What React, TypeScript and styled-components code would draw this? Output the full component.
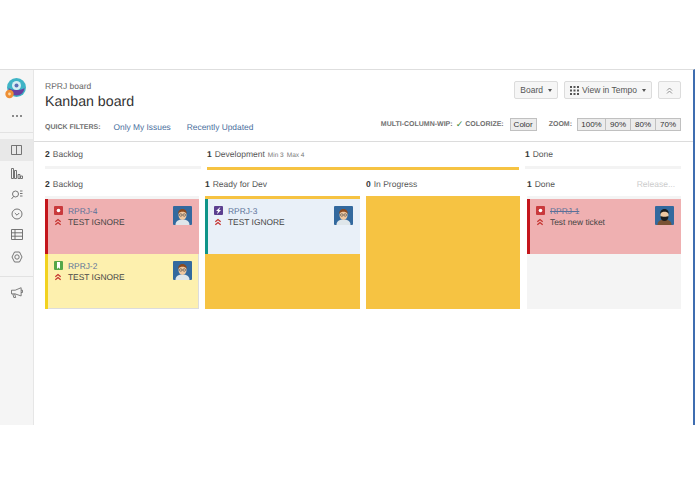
import { FC } from "react";
import styled, { createGlobalStyle } from "styled-components";

const GlobalStyle = createGlobalStyle`
  html, body {
    margin: 0;
    padding: 0;
    background: #fff;
    font-family: "Liberation Sans", Arial, sans-serif;
    color: #333;
    text-rendering: geometricPrecision;
  }
  * { box-sizing: border-box; }
`;

const Page = styled.div`
  width: 695px;
  height: 494px;
  padding-top: 69px;
  overflow: hidden;
`;

const Frame = styled.div`
  height: 356px;
  display: flex;
  border-top: 1px solid #dedede;
  border-right: 2px solid #3f6db0;
`;

const Sidebar = styled.nav`
  width: 34px;
  flex: none;
  background: #f5f5f5;
  border-right: 1px solid #e6e6e6;
  display: flex;
  flex-direction: column;
`;

const SideHead = styled.div`
  height: 63px;
  padding-top: 7px;
  display: flex;
  flex-direction: column;
  align-items: center;
  border-bottom: 1px solid #e2e2e2;
  margin-bottom: 6px;
`;

const Dots = styled.div`
  margin-top: 14px;
  display: flex;
  gap: 2px;
  i {
    width: 2px;
    height: 2px;
    background: #666;
    border-radius: 50%;
  }
`;

const SideItem = styled.div<{ $active?: boolean; $h: number }>`
  height: ${p => p.$h}px;
  display: flex;
  align-items: center;
  justify-content: center;
  background: ${p => (p.$active ? "#e8e8e8" : "transparent")};
  svg {
    fill: none;
    stroke: #666;
    stroke-width: 0.9;
  }
`;

const SideGroup = styled.div`
  border-bottom: 1px solid #e2e2e2;
  padding-bottom: 5px;
  margin-bottom: 5px;
`;

const Main = styled.main`
  flex: 1;
  min-width: 0;
  display: flex;
  flex-direction: column;
`;

const Header = styled.header`
  height: 72px;
  padding: 11px 12px 0 11px;
  border-bottom: 1px solid #dcdcdc;
`;

const TopRow = styled.div`
  display: flex;
  justify-content: space-between;
  align-items: flex-start;
  height: 37px;
`;

const Crumb = styled.div`
  font-size: 8.5px;
  line-height: 11px;
  color: #666;
`;

const Title = styled.h1`
  margin: 1px 0 0;
  font-size: 14.2px;
  line-height: 18px;
  font-weight: 400;
  color: #333;
`;

const Actions = styled.div`
  display: flex;
  gap: 6px;
`;

const Button = styled.button`
  height: 18px;
  padding: 0 5px;
  display: flex;
  align-items: center;
  gap: 3px;
  font: 8.5px "Liberation Sans", Arial, sans-serif;
  color: #555;
  background: #f6f6f6;
  border: 1px solid #dcdcdc;
  border-radius: 2px;
`;

const IconButton = styled(Button)`
  width: 23px;
  justify-content: center;
`;

const Caret = styled.span`
  width: 0;
  height: 0;
  margin-left: 2px;
  border-left: 2.5px solid transparent;
  border-right: 2.5px solid transparent;
  border-top: 3px solid #555;
`;

const FilterRow = styled.div`
  height: 16px;
  display: flex;
  justify-content: space-between;
`;

const Filters = styled.div`
  display: flex;
  align-items: flex-end;
`;

const SmallLabel = styled.span`
  font-size: 7px;
  line-height: 13px;
  font-weight: 700;
  color: #707070;
  white-space: nowrap;
`;

const FilterLink = styled.a`
  margin-left: 16px;
  font-size: 8.4px;
  line-height: 13px;
  color: #4a6f9e;
  ${SmallLabel} + & {
    margin-left: 13px;
  }
`;

const Tools = styled.div`
  display: flex;
  align-items: flex-start;
`;

const Check = styled.span`
  margin: 0 2px 0 3px;
  font-size: 9px;
  line-height: 13px;
  color: #3a8a3a;
`;

const ToolButton = styled.button`
  height: 13px;
  width: 27px;
  padding: 0;
  font: 8px "Liberation Sans", Arial, sans-serif;
  color: #333;
  background: #ececec;
  border: 1px solid #c0c0c0;
  margin-left: 6px;
  margin-right: 12px;
`;

const ZoomGroup = styled.div`
  margin-left: 5px;
  display: flex;
`;

const ZoomButton = styled.button<{ $wide: boolean }>`
  height: 13px;
  width: ${p => (p.$wide ? 29 : 25)}px;
  padding: 0;
  font: 8px "Liberation Sans", Arial, sans-serif;
  color: #333;
  background: #ececec;
  border: 1px solid #c0c0c0;
  & + & {
    border-left: none;
  }
`;

const Board = styled.section`
  padding: 0 12px 0 11px;
`;

const LaneRow = styled.div`
  display: grid;
  grid-template-columns: 156px 312px 156px;
  column-gap: 6px;
  height: 28px;
  padding-top: 7px;
`;

const Lane = styled.div`
  display: flex;
  flex-direction: column;
`;

const Label = styled.div`
  font-size: 8.5px;
  line-height: 11px;
  color: #555;
  white-space: nowrap;
  b {
    color: #333;
    margin-right: 3px;
  }
  small {
    margin-left: 3px;
    font-size: 6.5px;
    color: #777;
  }
`;

const LaneBar = styled.div<{ $color: string }>`
  height: 3px;
  margin-top: 6px;
  background: ${p => p.$color};
`;

const StatusRow = styled.div`
  display: grid;
  grid-template-columns: 154px 155px 154px 155px;
  column-gap: 6px;
  height: 26px;
  padding-top: 9px;
`;

const StatusLabel = styled(Label)`
  display: flex;
  justify-content: space-between;
  padding-right: 6px;
  margin-left: 1px;
  em {
    font-style: normal;
    color: #ccc;
  }
`;

const Columns = styled.div`
  display: grid;
  grid-template-columns: 154px 155px 154px 155px;
  column-gap: 6px;
`;

const Column = styled.div<{ $bg: string; $inset?: boolean }>`
  height: 113px;
  margin-left: ${p => (p.$inset ? 1 : 0)}px;
  background: ${p => p.$bg};
  padding-top: 3px;
`;

const Card = styled.article<{ $bg: string; $edge: string; $framed: boolean }>`
  height: 55px;
  padding: 6px 7px 0 6px;
  display: flex;
  align-items: flex-start;
  background: ${p => p.$bg};
  border-left: 3px solid ${p => p.$edge};
  box-shadow: ${p => (p.$framed ? "inset -1px -1px 0 #dcdcdc" : "none")};
  svg:last-child {
    margin-top: 1px;
  }
`;

const CardBody = styled.div`
  flex: 1;
  display: grid;
  grid-template-columns: 14px 1fr;
  grid-auto-rows: 11px;
  align-items: center;
`;

const IssueKey = styled.span<{ $done?: boolean }>`
  font-size: 8.4px;
  color: #5a7099;
  text-decoration: ${p => (p.$done ? "line-through" : "none")};
`;

const Summary = styled.span`
  font-size: 8.4px;
  color: #444;
`;

const TypeIcon: FC<{ kind: "bug" | "story" | "epic" }> = ({ kind }) => {
  const bg = kind === "bug" ? "#c9393c" : kind === "story" ? "#55a748" : "#5b3f8f";
  return (
    <svg width="9" height="9" viewBox="0 0 9 9">
      <rect width="9" height="9" rx="1" fill={bg} />
      {kind === "bug" && <circle cx="4.5" cy="4.5" r="1.8" fill="#fff" />}
      {kind === "story" && <path d="M3 1h3v7L4.500 6.600 3 8z" fill="#fff" />}
      {kind === "epic" && <path d="M6.500.8 2 5h2L3 8.200 7 4H5z" fill="#fff" />}
    </svg>
  );
};

const Priority = () => (
  <svg width="8" height="8" viewBox="0 0 9 9" fill="none" stroke="#c5322f" strokeWidth="1.4">
    <path d="M1.500 4.200 4.500 1.800l3 2.400" />
    <path d="M1.500 7.600l3-2.400 3 2.400" />
  </svg>
);

const Avatar: FC<{ beard?: boolean }> = ({ beard }) => (
  <svg width="19" height="19" viewBox="0 0 19 19">
    <rect width="19" height="19" rx="1" fill="#33699e" />
    <path d="M2.500 19c0-4 3-5.500 7-5.500s7 1.500 7 5.500z" fill={beard ? "#7a5233" : "#dfe6ea"} />
    <ellipse cx="9.500" cy="9" rx="4" ry="5" fill="#f0c8a0" />
    <path
      d="M5.300 8c-.4-3.500 2-5 4.200-5s4.600 1.500 4.200 5c-1-2-2.500-2.300-4.200-2.300S6.300 6 5.300 8z"
      fill={beard ? "#1c1c1c" : "#8c4a1e"}
    />
    {beard ? (
      <path d="M5.500 10c1 1 7 1 8 0 0 3-1.500 5-4 5s-4-2-4-5z" fill="#1c1c1c" />
    ) : (
      <g fill="none" stroke="#444" strokeWidth=".6">
        <circle cx="7.800" cy="9" r="1.300" />
        <circle cx="11.200" cy="9" r="1.300" />
      </g>
    )}
  </svg>
);

const Logo = () => (
  <svg width="23" height="24" viewBox="0 0 23 24">
    <circle cx="11.500" cy="10.500" r="9.500" fill="#3fb4c6" />
    <path d="M3.500 11c2 1.500 4.500 2 8 2s6-.5 8-2c-.5 4.500-3.500 7.500-8 7.500s-7.500-3-8-7.500z" fill="#6a3fa0" />
    <circle cx="11.500" cy="8.500" r="4.500" fill="#d6eef4" />
    <circle cx="11.500" cy="8.500" r="2" fill="#5a6fb5" />
    <circle cx="4.500" cy="17" r="4.200" fill="#ee8f35" />
    <circle cx="4.500" cy="17" r="1.400" fill="#f9d9a8" />
  </svg>
);

const issues = {
  four: { id: "RPRJ-4", text: "TEST IGNORE", kind: "bug", bg: "#efb0b1", edge: "#c4161c" },
  two: { id: "RPRJ-2", text: "TEST IGNORE", kind: "story", bg: "#fdf0ae", edge: "#f2d21f" },
  three: { id: "RPRJ-3", text: "TEST IGNORE", kind: "epic", bg: "#e9f0f8", edge: "#0f9488" },
  one: { id: "RPRJ-1", text: "Test new ticket", kind: "bug", bg: "#efb0b1", edge: "#c4161c", done: true },
} as const;

const IssueCard: FC<{ issue: (typeof issues)[keyof typeof issues] }> = ({ issue }) => {
  const done = "done" in issue;
  return (
    <Card $bg={issue.bg} $edge={issue.edge} $framed={issue.kind === "story"}>
      <CardBody>
        <TypeIcon kind={issue.kind} />
        <IssueKey $done={done}>{issue.id}</IssueKey>
        <Priority />
        <Summary>{issue.text}</Summary>
      </CardBody>
      <Avatar beard={done} />
    </Card>
  );
};

export default function App() {
  return (
    <Page>
      <GlobalStyle />
      <Frame>
        <Sidebar>
          <SideHead>
            <Logo />
            <Dots>
              <i />
              <i />
              <i />
            </Dots>
          </SideHead>
          <SideGroup>
            <SideItem $active $h={22}>
              <svg width="11" height="10" viewBox="0 0 11 10">
                <path d="M.5.5h10v9H.5zM5.500.5v9" />
              </svg>
            </SideItem>
            <SideItem $h={24}>
              <svg width="12" height="11" viewBox="0 0 12 11">
                <path d="M.5 10.500V.5h2v10zM3.500 10.500V2.500h2v8zM7 10.500V6.500h2v4zM9.500 10.500V8h2v2.500z" />
              </svg>
            </SideItem>
            <SideItem $h={18}>
              <svg width="12" height="11" viewBox="0 0 12 11">
                <circle cx="4.500" cy="5" r="3" />
                <path d="M2.500 7.500.5 10M9 2h2.500M9 4.500h2.500M9 7h2.500" />
              </svg>
            </SideItem>
            <SideItem $h={22}>
              <svg width="12" height="12" viewBox="0 0 12 12">
                <circle cx="6" cy="6" r="5" />
                <path d="M3.800 5 6 7.200 8.200 5" />
              </svg>
            </SideItem>
            <SideItem $h={18}>
              <svg width="12" height="11" viewBox="0 0 12 11">
                <path d="M.5.500h11v10H.5zM.5 3.800h11M.5 7.200h11M4 .5v10" />
              </svg>
            </SideItem>
            <SideItem $h={28}>
              <svg width="12" height="12" viewBox="0 0 12 12">
                <path d="M3.500 1h5L11 6 8.500 11h-5L1 6z" />
                <circle cx="6" cy="6" r="2.200" />
              </svg>
            </SideItem>
          </SideGroup>
          <SideItem $h={20}>
            <svg width="12" height="11" viewBox="0 0 13 12">
              <path d="M.5 3.500h4L11 .8v9L4.500 7.500h-4zM2 7.500l1 4h2l-1-4M11 3.500h1.500v2.500H11" />
            </svg>
          </SideItem>
        </Sidebar>
        <Main>
          <Header>
            <TopRow>
              <div>
                <Crumb>RPRJ board</Crumb>
                <Title>Kanban board</Title>
              </div>
              <Actions>
                <Button>
                  Board
                  <Caret />
                </Button>
                <Button>
                  <svg width="9" height="9" viewBox="0 0 9 9" fill="#555">
                    {[0, 3.5, 7].map(x =>
                      [0, 3.5, 7].map(y => <rect key={`${x}-${y}`} x={x} y={y} width="2" height="2" />)
                    )}
                  </svg>
                  View in Tempo
                  <Caret />
                </Button>
                <IconButton>
                  <svg width="9" height="9" viewBox="0 0 9 9" fill="none" stroke="#777" strokeWidth=".8">
                    <path d="M2 4.500 4.500 2 7 4.500M2 7.500 4.500 5 7 7.500" />
                  </svg>
                </IconButton>
              </Actions>
            </TopRow>
            <FilterRow>
              <Filters>
                <SmallLabel>QUICK FILTERS:</SmallLabel>
                <FilterLink>Only My Issues</FilterLink>
                <FilterLink>Recently Updated</FilterLink>
              </Filters>
              <Tools>
                <SmallLabel>MULTI-COLUMN-WIP:</SmallLabel>
                <Check>✓</Check>
                <SmallLabel>COLORIZE:</SmallLabel>
                <ToolButton>Color</ToolButton>
                <SmallLabel>ZOOM:</SmallLabel>
                <ZoomGroup>
                  {["100%", "90%", "80%", "70%"].map(z => (
                    <ZoomButton key={z} $wide={z === "100%"}>
                      {z}
                    </ZoomButton>
                  ))}
                </ZoomGroup>
              </Tools>
            </FilterRow>
          </Header>
          <Board>
            <LaneRow>
              <Lane>
                <Label>
                  <b>2</b>Backlog
                </Label>
                <LaneBar $color="#f3f3f3" />
              </Lane>
              <Lane>
                <Label>
                  <b>1</b>Development<small>Min 3</small>
                  <small>Max 4</small>
                </Label>
                <LaneBar $color="#f6c342" />
              </Lane>
              <Lane>
                <Label>
                  <b>1</b>Done
                </Label>
                <LaneBar $color="#f3f3f3" />
              </Lane>
            </LaneRow>
            <StatusRow>
              <Label>
                <b>2</b>Backlog
              </Label>
              <Label>
                <b>1</b>Ready for Dev
              </Label>
              <Label>
                <b>0</b>In Progress
              </Label>
              <StatusLabel>
                <span>
                  <b>1</b>Done
                </span>
                <em>Release...</em>
              </StatusLabel>
            </StatusRow>
            <Columns>
              <Column $bg="#f4f4f4">
                <IssueCard issue={issues.four} />
                <IssueCard issue={issues.two} />
              </Column>
              <Column $bg="#f6c342">
                <IssueCard issue={issues.three} />
              </Column>
              <Column $bg="#f6c342" />
              <Column $bg="#f4f4f4" $inset>
                <IssueCard issue={issues.one} />
              </Column>
            </Columns>
          </Board>
        </Main>
      </Frame>
    </Page>
  );
}
